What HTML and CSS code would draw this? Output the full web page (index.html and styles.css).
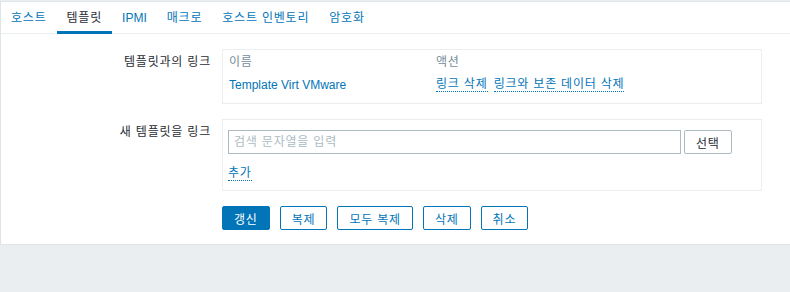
FILE: index.html
```html
<!DOCTYPE html>
<html>
<head>
    <meta name="viewport" content="width=device-width, initial-scale=1">
    <link rel="stylesheet" href="styles.css">
</head>
<body>
    <div class="panel">
        <!-- Tabs -->
        <ul class="tabs">
            <li class="tab">호스트</li>
            <li class="tab active-tab">템플릿</li>
            <li class="tab latin">IPMI</li>
            <li class="tab">매크로</li>
            <li class="tab">호스트 인벤토리</li>
            <li class="tab">암호화</li>
        </ul>

        <div class="form">
            <div class="form-row">
                <label class="form-label">템플릿과의 링크</label>
                <div class="form-field">
                    <table class="linked-table">
                        <tr>
                            <th class="col-name">이름</th>
                            <th>액션</th>
                        </tr>
                        <tr>
                            <td><a class="link latin">Template Virt VMware</a></td>
                            <td>
                                <a class="link-action">링크 삭제</a>
                                <a class="link-action">링크와 보존 데이터 삭제</a>
                            </td>
                        </tr>
                    </table>
                </div>
            </div>

            <div class="form-row">
                <label class="form-label">새 템플릿을 링크</label>
                <div class="form-field field-new">
                    <div class="search-line">
                        <input class="search-input" type="text" placeholder="검색 문자열을 입력">
                        <button class="btn-grey">선택</button>
                    </div>
                    <div class="add-line"><a class="link-action">추가</a></div>
                </div>
            </div>

            <div class="form-buttons">
                <button class="btn-main">갱신</button>
                <button class="btn-alt">복제</button>
                <button class="btn-alt">모두 복제</button>
                <button class="btn-alt">삭제</button>
                <button class="btn-alt">취소</button>
            </div>
        </div>
    </div>
</body>
</html>
```

FILE: styles.css
```css
/* Base */
html, body {
    margin: 0;
    padding: 0;
    overflow: hidden;
}

body {
    background-color: #ebeef0;
    font-family: "Liberation Sans", "Noto Sans CJK KR", sans-serif;
    font-size: 12px;
    line-height: 14px;
    letter-spacing: 0.8px; /* hangul in the reference runs a bit wider */
    color: #1f2c33;
}

.latin {
    letter-spacing: 0;
}

.panel {
    margin-top: 1px;
    width: 820px;
    background-color: #fff;
    border: 1px solid #dfe4e7;
    padding-bottom: 14px;
}

/* Tabs */
.tabs {
    display: flex;
    list-style: none;
    margin: 0;
    padding: 0;
    height: 31px;
    border-bottom: 1px solid #ebeef0;
}

.tab {
    box-sizing: border-box;
    height: 32px;
    padding: 9px 10px 0;
    color: #0275b8;
    cursor: pointer;
}

.active-tab {
    color: #1f2c33;
    border-bottom: 3px solid #0275b8;
}

/* Form */
.form {
    padding-top: 15px;
}

.form-row {
    display: grid;
    grid-template-columns: 210px 540px;
    column-gap: 11px;
    margin-bottom: 15px;
}

.form-label {
    text-align: right;
    padding-top: 6px;
}

.form-field {
    border: 1px solid #ebeef0;
    padding: 5px;
}

.linked-table {
    border-collapse: collapse;
}

.linked-table th {
    text-align: left;
    font-weight: normal;
    color: #768d99;
    padding: 0 0 0 1px;
}

.linked-table td {
    padding: 8px 0 6px 1px;
}

.col-name {
    width: 206px;
}

.link {
    color: #0275b8;
}

.link-action {
    display: inline-block;
    color: #0275b8;
    border-bottom: 1px dotted #0275b8;
    margin-right: 2px;
    cursor: pointer;
}

.field-new {
    padding: 10px 5px 9px;
}

.search-line {
    display: flex;
    gap: 3px;
}

.search-input {
    box-sizing: border-box;
    width: 453px;
    height: 24px;
    border: 1px solid #acbbc2;
    padding: 0 5px;
    font-family: inherit;
    font-size: 12px;
    letter-spacing: inherit;
    color: #1f2c33;
    outline: none;
}

.search-input::placeholder {
    color: #acbbc2;
}

.add-line {
    margin-top: 12px;
}

/* Buttons */
button {
    box-sizing: border-box;
    height: 24px;
    padding: 0 11px;
    font-family: inherit;
    font-size: 12px;
    letter-spacing: inherit;
    border-radius: 2px;
    cursor: pointer;
}

.btn-grey {
    background-color: #fff;
    border: 1px solid #acbbc2;
    color: #1f2c33;
}

.btn-main {
    background-color: #0275b8;
    border: 1px solid #0275b8;
    color: #fff;
}

.btn-alt {
    background-color: #fff;
    border: 1px solid #0275b8;
    color: #0275b8;
}

.form-buttons {
    display: flex;
    gap: 10px;
    padding-left: 221px;
}
```
